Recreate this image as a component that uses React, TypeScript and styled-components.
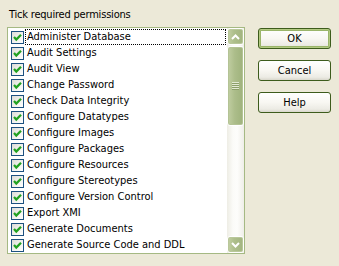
import React from 'react'
import styled, { createGlobalStyle } from 'styled-components'

const GlobalStyle = createGlobalStyle`
  html, body {
    margin: 0;
    padding: 0;
    background: #ece9d8;
  }
  body {
    font-family: "DejaVu Sans Condensed", "Liberation Sans", Arial, sans-serif;
    font-size: 11px;
    color: #000;
  }
`

const Dialog = styled.div`
  width: 339px;
  height: 266px;
  box-sizing: border-box;
  display: flex;
  gap: 13px;
  padding: 8px 0 0 7px;
`

const LeftColumn = styled.div`
  display: flex;
  flex-direction: column;
`

const Caption = styled.div`
  height: 14px;
  line-height: 14px;
  padding-left: 2px;
  margin-bottom: 5px;
  letter-spacing: -0.2px;
`

const ListBox = styled.div`
  width: 238px;
  height: 227px;
  box-sizing: border-box;
  border: 1px solid #a5b983;
  background: #fff;
  display: flex;
`

const Rows = styled.div`
  flex: 1;
  padding-top: 1px;
  overflow: hidden;
`

const Row = styled.div`
  height: 16px;
  display: flex;
  align-items: center;
  padding-left: 3px;
`

const CheckBox = styled.div`
  width: 13px;
  height: 13px;
  box-sizing: border-box;
  border: 1px solid #1c5180;
  background: linear-gradient(135deg, #dcdcd7 0%, #f4f4f0 60%, #ffffff 100%);
  display: flex;
  align-items: center;
  justify-content: center;
  flex: none;
`

const ItemLabel = styled.div<{ $focused?: boolean }>`
  flex: 1;
  height: 16px;
  box-sizing: border-box;
  margin-left: 1px;
  margin-right: 1px;
  padding-left: 1px;
  line-height: 14px;
  white-space: nowrap;
  border: 1px dotted ${({ $focused }) => ($focused ? '#000' : 'transparent')};
`

const ScrollBar = styled.div`
  width: 17px;
  display: flex;
  flex-direction: column;
  background: linear-gradient(to right, #eeede5 0%, #fbfbf8 35%, #fdfdfb 60%, #efeee8 100%);
`

const ScrollButton = styled.div`
  height: 17px;
  box-sizing: border-box;
  border: 1px solid #fff;
  border-radius: 3px;
  background: linear-gradient(to right, #c3cfa3 0%, #aebf8c 40%, #a2b47f 100%);
  box-shadow: inset 0 0 0 1px #b9c79a;
  display: flex;
  align-items: center;
  justify-content: center;
  flex: none;
`

const Track = styled.div`
  flex: 1;
  display: flex;
  flex-direction: column;
`

const Thumb = styled.div<{ $size: number }>`
  height: ${({ $size }) => $size}px;
  margin-top: 1px;
  box-sizing: border-box;
  border: 1px solid #fff;
  border-radius: 3px;
  background: linear-gradient(to right, #c1cea2 0%, #acbd8a 45%, #9fb27c 100%);
  box-shadow: inset 0 0 0 1px #b4c395;
  display: flex;
  align-items: center;
  justify-content: center;
`

const Grip = styled.div`
  width: 7px;
  height: 8px;
  background: repeating-linear-gradient(
    to bottom,
    #e2e9d3 0px,
    #e2e9d3 1px,
    #8c9f6a 1px,
    #8c9f6a 2px
  );
`

const ButtonColumn = styled.div`
  display: flex;
  flex-direction: column;
  gap: 11px;
  padding-top: 20px;
`

const Button = styled.div<{ $default?: boolean }>`
  width: 73px;
  height: 21px;
  box-sizing: border-box;
  border: 1px solid #3d5c1c;
  border-radius: 3px;
  background: linear-gradient(to bottom, #ffffff 0%, #f8f7f2 50%, #ecebe4 85%, #d9d7cc 100%);
  box-shadow: ${({ $default }) =>
    $default ? 'inset 0 0 0 1px #b3ca82, inset 0 0 0 2px #9ab56a' : 'none'};
  display: flex;
  align-items: center;
  justify-content: center;
`

const permissions = [
  'Administer Database',
  'Audit Settings',
  'Audit View',
  'Change Password',
  'Check Data Integrity',
  'Configure Datatypes',
  'Configure Images',
  'Configure Packages',
  'Configure Resources',
  'Configure Stereotypes',
  'Configure Version Control',
  'Export XMI',
  'Generate Documents',
  'Generate Source Code and DDL',
]

const Check = () => (
  <svg width="9" height="9" viewBox="0 0 9 9">
    <polyline points="1,4 3.3,6.5 8,1.8" fill="none" stroke="#21a121" strokeWidth="2.3" />
  </svg>
)

const Arrow = ({ down }: { down?: boolean }) => (
  <svg width="9" height="6" viewBox="0 0 9 6">
    <polyline
      points={down ? '1,1 4.5,4.5 8,1' : '1,5 4.5,1.5 8,5'}
      fill="none"
      stroke="#fff"
      strokeWidth="2"
    />
  </svg>
)

export default function App() {
  return (
    <>
      <GlobalStyle />
      <Dialog>
        <LeftColumn>
          <Caption>Tick required permissions</Caption>
          <ListBox>
            <Rows>
              {permissions.map((p, i) => (
                <Row key={p}>
                  <CheckBox>
                    <Check />
                  </CheckBox>
                  <ItemLabel $focused={i === 0}>{p}</ItemLabel>
                </Row>
              ))}
            </Rows>
            <ScrollBar>
              <ScrollButton>
                <Arrow />
              </ScrollButton>
              <Track>
                <Thumb $size={80}>
                  <Grip />
                </Thumb>
              </Track>
              <ScrollButton>
                <Arrow down />
              </ScrollButton>
            </ScrollBar>
          </ListBox>
        </LeftColumn>
        <ButtonColumn>
          <Button $default>OK</Button>
          <Button>Cancel</Button>
          <Button>Help</Button>
        </ButtonColumn>
      </Dialog>
    </>
  )
}
